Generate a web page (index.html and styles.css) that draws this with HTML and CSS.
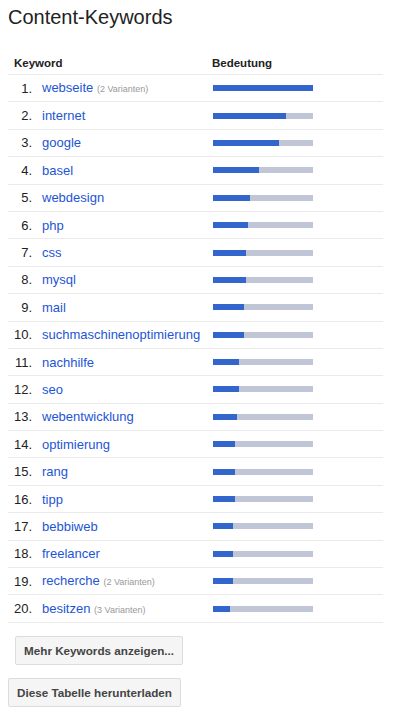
FILE: index.html
```html
<!DOCTYPE html>
<html lang="de">
<head>
<meta charset="utf-8">
<title>Content-Keywords</title>
<link rel="stylesheet" href="styles.css">
</head>
<body>
<h1 class="title">Content-Keywords</h1>
<div class="table">
  <div class="head">
    <div class="h-key">Keyword</div>
    <div class="h-bed">Bedeutung</div>
  </div>
  <div class="row"><span class="num">1.</span><span class="kw"><a href="#">webseite</a> <span class="var">(2 Varianten)</span></span><span class="bar"><span class="fill" style="width:100px"></span></span></div>
  <div class="row"><span class="num">2.</span><span class="kw"><a href="#">internet</a></span><span class="bar"><span class="fill" style="width:73px"></span></span></div>
  <div class="row"><span class="num">3.</span><span class="kw"><a href="#">google</a></span><span class="bar"><span class="fill" style="width:66px"></span></span></div>
  <div class="row"><span class="num">4.</span><span class="kw"><a href="#">basel</a></span><span class="bar"><span class="fill" style="width:46px"></span></span></div>
  <div class="row"><span class="num">5.</span><span class="kw"><a href="#">webdesign</a></span><span class="bar"><span class="fill" style="width:37px"></span></span></div>
  <div class="row"><span class="num">6.</span><span class="kw"><a href="#">php</a></span><span class="bar"><span class="fill" style="width:35px"></span></span></div>
  <div class="row"><span class="num">7.</span><span class="kw"><a href="#">css</a></span><span class="bar"><span class="fill" style="width:33px"></span></span></div>
  <div class="row"><span class="num">8.</span><span class="kw"><a href="#">mysql</a></span><span class="bar"><span class="fill" style="width:33px"></span></span></div>
  <div class="row"><span class="num">9.</span><span class="kw"><a href="#">mail</a></span><span class="bar"><span class="fill" style="width:31px"></span></span></div>
  <div class="row"><span class="num">10.</span><span class="kw"><a href="#">suchmaschinenoptimierung</a></span><span class="bar"><span class="fill" style="width:31px"></span></span></div>
  <div class="row"><span class="num">11.</span><span class="kw"><a href="#">nachhilfe</a></span><span class="bar"><span class="fill" style="width:26px"></span></span></div>
  <div class="row"><span class="num">12.</span><span class="kw"><a href="#">seo</a></span><span class="bar"><span class="fill" style="width:26px"></span></span></div>
  <div class="row"><span class="num">13.</span><span class="kw"><a href="#">webentwicklung</a></span><span class="bar"><span class="fill" style="width:24px"></span></span></div>
  <div class="row"><span class="num">14.</span><span class="kw"><a href="#">optimierung</a></span><span class="bar"><span class="fill" style="width:22px"></span></span></div>
  <div class="row"><span class="num">15.</span><span class="kw"><a href="#">rang</a></span><span class="bar"><span class="fill" style="width:22px"></span></span></div>
  <div class="row"><span class="num">16.</span><span class="kw"><a href="#">tipp</a></span><span class="bar"><span class="fill" style="width:22px"></span></span></div>
  <div class="row"><span class="num">17.</span><span class="kw"><a href="#">bebbiweb</a></span><span class="bar"><span class="fill" style="width:20px"></span></span></div>
  <div class="row"><span class="num">18.</span><span class="kw"><a href="#">freelancer</a></span><span class="bar"><span class="fill" style="width:20px"></span></span></div>
  <div class="row"><span class="num">19.</span><span class="kw"><a href="#">recherche</a> <span class="var">(2 Varianten)</span></span><span class="bar"><span class="fill" style="width:20px"></span></span></div>
  <div class="row"><span class="num">20.</span><span class="kw"><a href="#">besitzen</a> <span class="var">(3 Varianten)</span></span><span class="bar"><span class="fill" style="width:17px"></span></span></div>
</div>
<div class="more"><button class="btn btn-more">Mehr Keywords anzeigen...</button></div>
<div class="download"><button class="btn btn-dl">Diese Tabelle herunterladen</button></div>
</body>
</html>
```

FILE: styles.css
```css
html, body {
  margin: 0;
  padding: 0;
  background: #fff;
}
body {
  padding: 0 8px;
  font-family: "Liberation Sans", Arial, sans-serif;
  color: #222;
}
.title {
  margin: 0;
  padding-top: 7px;
  font-size: 20px;
  line-height: 20px;
  font-weight: normal;
  color: #222;
}
.table {
  width: 375px;
  margin-top: 29px;
}
.head {
  display: flex;
  height: 18px;
  border-bottom: 1px solid #ebebeb;
  font-size: 11.5px;
  font-weight: bold;
  line-height: 14px;
  color: #222;
}
.h-key {
  width: 198px;
  padding-left: 6px;
}
.h-bed {
  flex: 1;
}
.row {
  display: flex;
  align-items: center;
  height: 26.4px;
  border-bottom: 1px solid #ebebeb;
  font-size: 13px;
  line-height: 16px;
}
.num {
  width: 24px;
  text-align: right;
  color: #222;
  flex: none;
  padding-top: 1px;
}
.kw {
  width: 170px;
  margin-left: 10px;
  white-space: nowrap;
  flex: none;
  padding-top: 1px;
}
.kw a {
  color: #1d55d6;
  text-decoration: none;
}
.var {
  font-size: 9px;
  color: #999;
}
.bar {
  display: block;
  width: 100px;
  height: 6px;
  margin-left: 1px;
  background: #c0c6d6;
  flex: none;
}
.fill {
  display: block;
  height: 6px;
  background: #3366cc;
}
.more {
  margin-top: 13px;
  padding-left: 7px;
}
.download {
  margin-top: 13px;
}
.btn {
  display: inline-block;
  height: 29px;
  margin: 0;
  border: 1px solid #dcdcdc;
  border-radius: 2px;
  background: #f5f5f5;
  font-family: "Liberation Sans", Arial, sans-serif;
  font-size: 11.7px;
  font-weight: bold;
  color: #444;
  line-height: 27px;
  box-sizing: border-box;
  white-space: nowrap;
}
.btn-more {
  width: 168px;
  padding: 0 8px;
}
.btn-dl {
  width: 173px;
  padding: 0 7px;
}
```
